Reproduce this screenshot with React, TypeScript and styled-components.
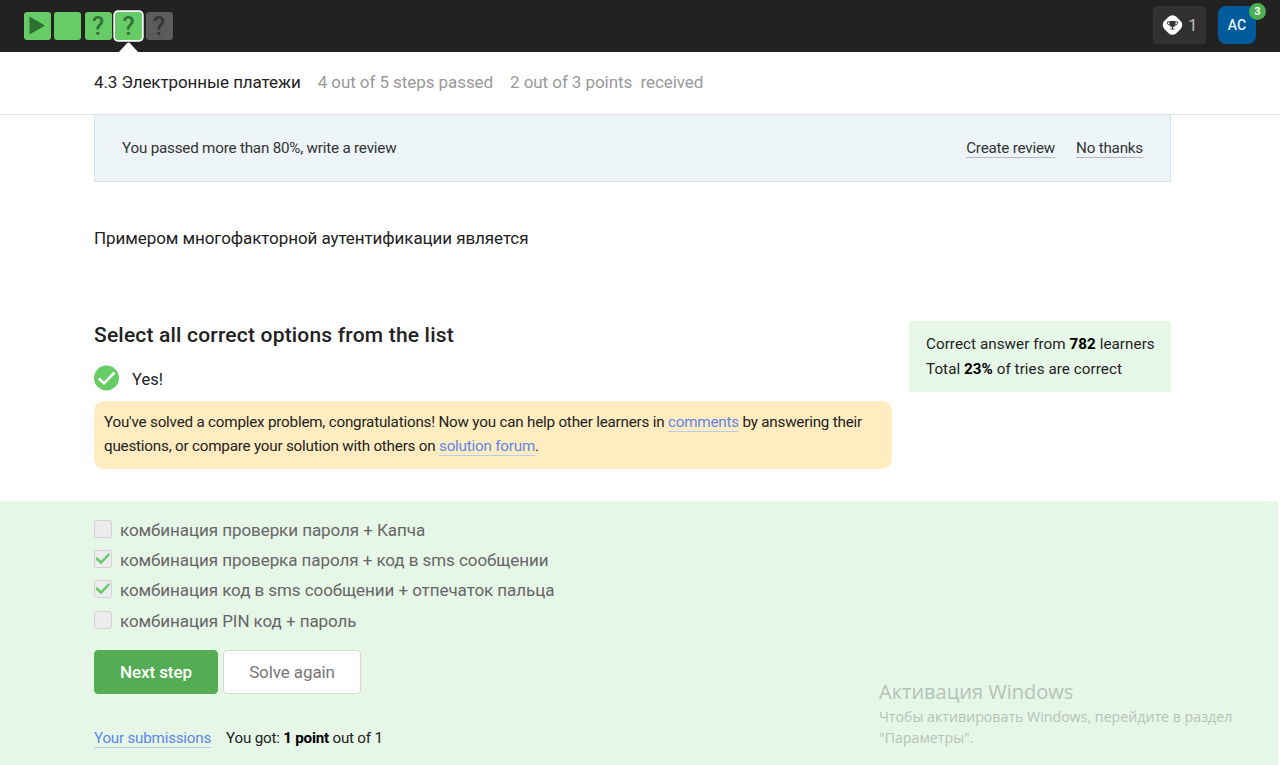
import React from 'react';
import styled, { createGlobalStyle } from 'styled-components';

const GlobalStyle = createGlobalStyle`
  *, *::before, *::after { box-sizing: border-box; }
  body { margin: 0; background: #fff; color: #222; font-family: Roboto, 'Liberation Sans', sans-serif; }
  p, h2, ul { margin: 0; padding: 0; font-weight: 400; }
  button { font-family: inherit; }
`;

const Page = styled.div`
  width: 1280px;
  height: 765px;
  overflow: hidden;
  display: flex;
  flex-direction: column;
`;

const TopBar = styled.header`
  height: 52px;
  flex: none;
  background: #222;
  display: flex;
  justify-content: space-between;
  padding: 6px 24px 0 23.5px;
`;

const Steps = styled.nav`
  display: flex;
  gap: 3.5px;
  padding-top: 6px;
`;

const Step = styled.div<{ $idle?: boolean; $current?: boolean }>`
  position: relative;
  width: 27px;
  height: 28px;
  border-radius: 3px;
  background: ${p => (p.$idle ? '#5b5b5b' : '#66cc66')};
  color: ${p => (p.$idle ? '#363636' : '#327435')};
  box-shadow: ${p => (p.$current ? '0 0 0 1.7px #fff' : 'none')};
  display: flex;
  align-items: center;
  justify-content: center;
  font-size: 25px;
  line-height: 28px;
  padding-top: 1px;
  font-weight: 500;
`;

const PlayIcon = styled.svg`
  margin-top: -1px;
`;

const Pointer = styled.svg`
  position: absolute;
  left: 3px;
  top: 30px;
`;

const UserArea = styled.div`
  display: flex;
  gap: 12px;
`;

const Score = styled.div`
  width: 53px;
  height: 38px;
  border-radius: 4px;
  background: #313131;
  color: #bbb;
  font-size: 17px;
  display: flex;
  align-items: center;
  gap: 4px;
  padding-left: 8px;
`;

const Avatar = styled.div`
  position: relative;
  width: 38px;
  height: 38px;
  border-radius: 8px;
  background: #005a9c;
  color: #e8f0f7;
  font-size: 14px;
  font-weight: 500;
  display: flex;
  align-items: center;
  justify-content: center;
`;

const Badge = styled.span`
  position: absolute;
  top: -3px;
  right: -10px;
  width: 17px;
  height: 17px;
  border-radius: 50%;
  background: #4caf50;
  color: #fff;
  font-size: 11px;
  font-weight: 700;
  line-height: 18px;
  text-align: center;
`;

const LessonBar = styled.div`
  height: 63px;
  flex: none;
  border-bottom: 1px solid #e3e5e7;
  padding: 0 94px 2px;
  display: flex;
  align-items: center;
  gap: 17px;
  font-size: 17px;
  letter-spacing: -0.07px;
  color: #999;
  white-space: pre;
`;

const LessonTitle = styled.span`
  color: #222;
  letter-spacing: -0.09px;
`;

const Review = styled.section`
  margin: 0 109px 0 94px;
  height: 67px;
  flex: none;
  border: 1px solid #d9e2e7;
  border-top: 0;
  background: #edf5f9;
  display: flex;
  align-items: center;
  justify-content: space-between;
  padding: 0 27px;
  font-size: 15.2px;
  letter-spacing: -0.2px;
  color: #333;
`;

const ReviewActions = styled.div`
  display: flex;
  gap: 21px;
`;

const ReviewLink = styled.a`
  line-height: 18px;
  border-bottom: 1px solid #b4babd;
`;

const Question = styled.p`
  margin: 45px 94px 0;
  height: 94px;
  flex: none;
  font-size: 17px;
  line-height: 22px;
  letter-spacing: -0.08px;
`;

const Task = styled.section`
  margin: 0 109px 0 94px;
  height: 180px;
  flex: none;
  display: flex;
  align-items: flex-start;
  justify-content: space-between;
`;

const Result = styled.div`
  width: 798px;
`;

const Heading = styled.h2`
  && { font-weight: 500; }
  font-size: 21px;
  line-height: 28px;
  letter-spacing: 0.19px;
`;

const Verdict = styled.div`
  height: 26px;
  margin-top: 16px;
  display: flex;
  align-items: center;
  gap: 13px;
  font-size: 16.5px;
  line-height: 24px;
`;

const VerdictText = styled.span`
  padding-top: 3px;
`;

const Congrats = styled.p`
  margin-top: 10px;
  height: 68px;
  padding: 9px 10px 0;
  border-radius: 10px;
  background: #ffecc0;
  font-size: 15.2px;
  line-height: 24px;
  letter-spacing: -0.2px;
  white-space: nowrap;
`;

const Link = styled.a`
  color: #5e86ea;
  border-bottom: 1px solid #b9cbf0;
`;

const Stats = styled.aside`
  width: 262px;
  height: 71px;
  border-radius: 3px;
  background: #e6f7e8;
  padding: 11px 17px;
  font-size: 15.2px;
  line-height: 25px;
  letter-spacing: 0.06px;
  white-space: nowrap;
  b { color: #000; }
`;

const Answer = styled.section`
  position: relative;
  flex: 1;
  margin-right: 2px;
  background: #e6f7e8;
  padding: 14px 94px 0;
`;

const Options = styled.ul`
  list-style: none;
`;

const Option = styled.li`
  height: 30.2px;
  display: flex;
  align-items: center;
  gap: 8px;
  font-size: 17px;
  letter-spacing: -0.065px;
  color: #666;
`;

const Box = styled.span`
  width: 18px;
  height: 18px;
  margin-top: -2px;
  border: 1px solid #d5d2d5;
  border-radius: 3px;
  background: #ececec;
  display: flex;
`;

const Buttons = styled.div`
  display: flex;
  gap: 5px;
  margin-top: 14px;
`;

const Button = styled.button<{ $primary?: boolean }>`
  width: ${p => (p.$primary ? 124 : 138)}px;
  height: 44px;
  padding: 0;
  border: 1px solid ${p => (p.$primary ? '#54ad54' : '#d3d8d4')};
  border-radius: 4px;
  background: ${p => (p.$primary ? '#54ad54' : '#fff')};
  color: ${p => (p.$primary ? '#fff' : '#777')};
  font-size: 17px;
  letter-spacing: -0.1px;
  font-weight: ${p => (p.$primary ? 500 : 400)};
`;

const Submission = styled.div`
  display: flex;
  gap: 15px;
  margin-top: 35px;
  font-size: 15.2px;
  line-height: 18px;
  letter-spacing: -0.22px;
  b { color: #000; }
`;

const Watermark = styled.div`
  position: absolute;
  left: 879px;
  top: 177px;
  color: #b5c3b7;
  font-family: 'Open Sans', sans-serif;
  font-size: 14.2px;
  line-height: 21px;
  white-space: nowrap;
`;

const WatermarkTitle = styled.div`
  font-size: 20px;
  line-height: 28px;
`;

const Trophy = () => (
  <svg width="23" height="22" viewBox="0 0 23 22">
    <rect x="3" y="2.500" width="17" height="17" rx="5.500" fill="#fff" transform="rotate(45 11.500 11)" />
    <path d="M8.500 7h6v4q-.6 2-3 2.200-2.400-.2-3-2.200z" fill="#333" />
    <path d="M8.500 8H6.400v1.200q.2 1.600 2.400 1.900M14.500 8h2.100v1.200q-.2 1.600-2.400 1.900" fill="none" stroke="#333" strokeWidth="1" />
    <path d="M11 13h1v1.500h1.500v1h-4v-1H11z" fill="#333" />
  </svg>
);

const options = [
  { text: 'комбинация проверки пароля + Капча', checked: false },
  { text: 'комбинация проверка пароля + код в sms сообщении', checked: true },
  { text: 'комбинация код в sms сообщении + отпечаток пальца', checked: true },
  { text: 'комбинация PIN код + пароль', checked: false },
];

export default function App() {
  return (
    <Page>
      <GlobalStyle />
      <TopBar>
        <Steps>
          <Step>
            <PlayIcon width="27" height="28" viewBox="0 0 27 28"><path d="M5.500 4.500v18L21 13.500z" fill="#2f7032" /></PlayIcon>
          </Step>
          <Step />
          <Step>?</Step>
          <Step $current>
            ?
            <Pointer width="21" height="11" viewBox="0 0 21 11"><path d="M0 11 9 1.200q1.500-1.500 3 0L21 11z" fill="#fff" /></Pointer>
          </Step>
          <Step $idle>?</Step>
        </Steps>
        <UserArea>
          <Score><Trophy />1</Score>
          <Avatar>AC<Badge>3</Badge></Avatar>
        </UserArea>
      </TopBar>
      <LessonBar>
        <LessonTitle>4.3 Электронные платежи</LessonTitle>
        <span>4 out of 5 steps passed</span>
        <span>2 out of 3 points  received</span>
      </LessonBar>
      <Review>
        <span>You passed more than 80%, write a review</span>
        <ReviewActions>
          <ReviewLink>Create review</ReviewLink>
          <ReviewLink>No thanks</ReviewLink>
        </ReviewActions>
      </Review>
      <Question>Примером многофакторной аутентификации является</Question>
      <Task>
        <Result>
          <Heading>Select all correct options from the list</Heading>
          <Verdict>
            <svg width="25" height="26" viewBox="0 0 25 26">
              <circle cx="12.500" cy="13" r="12.500" fill="#66cc66" />
              <path d="m4.800 13.500 5.200 4.800L20.500 7.500" fill="none" stroke="#fff" strokeWidth="2.600" />
            </svg>
            <VerdictText>Yes!</VerdictText>
          </Verdict>
          <Congrats>
            You've solved a complex problem, congratulations! Now you can help other learners in <Link>comments</Link> by answering their
            <br />
            questions, or compare your solution with others on <Link>solution forum</Link>.
          </Congrats>
        </Result>
        <Stats>
          Correct answer from <b>782</b> learners
          <br />
          Total <b>23%</b> of tries are correct
        </Stats>
      </Task>
      <Answer>
        <Options>
          {options.map(o => (
            <Option key={o.text}>
              <Box>
                {o.checked && (
                  <svg width="16" height="16" viewBox="0 0 16 16"><path d="m1.200 7 4.800 4.500L14.300 3" fill="none" stroke="#62cb64" strokeWidth="2.500" /></svg>
                )}
              </Box>
              {o.text}
            </Option>
          ))}
        </Options>
        <Buttons>
          <Button $primary>Next step</Button>
          <Button>Solve again</Button>
        </Buttons>
        <Submission>
          <Link>Your submissions</Link>
          <span>You got: <b>1 point</b> out of 1</span>
        </Submission>
        <Watermark>
          <WatermarkTitle>Активация Windows</WatermarkTitle>
          Чтобы активировать Windows, перейдите в раздел
          <br />
          "Параметры".
        </Watermark>
      </Answer>
    </Page>
  );
}
